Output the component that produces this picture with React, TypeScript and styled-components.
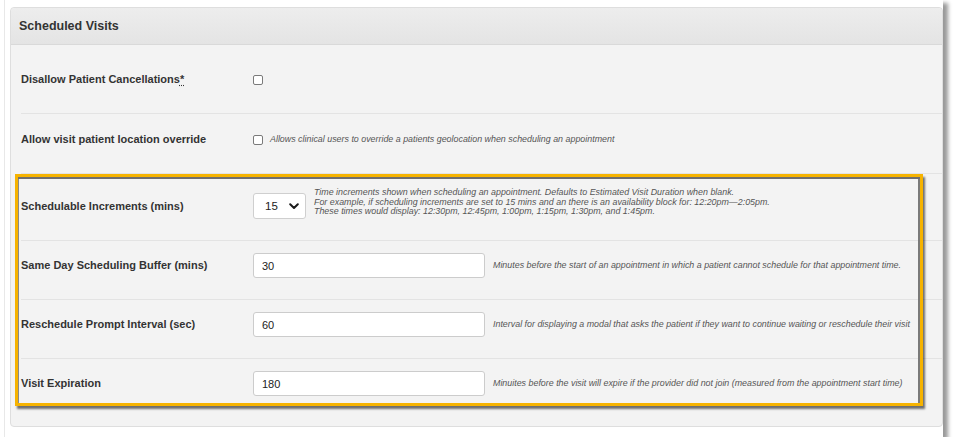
import React from "react";
import styled, { createGlobalStyle } from "styled-components";

const GlobalStyle = createGlobalStyle`
  body {
    margin: 0;
    background: #ffffff;
    font-family: "Liberation Sans", Arial, Helvetica, sans-serif;
    color: #333333;
  }
`;

const Frame = styled.div`
  width: 933px;
  margin-left: 4px;
  padding: 7px 0 10px 5px;
  background: #ffffff;
  border-left: 1px solid #e8e8e8;
  box-shadow: 5px 3px 4px rgba(0, 0, 0, 0.4);
`;

const Panel = styled.div`
  background: #f3f3f3;
  border: 1px solid #dedede;
  border-radius: 4px;
`;

const Header = styled.div`
  height: 36px;
  display: flex;
  align-items: center;
  padding-left: 8px;
  background: linear-gradient(#ededed, #e4e4e4);
  border-bottom: 1px solid #d9d9d9;
  border-radius: 4px 4px 0 0;
`;

const Title = styled.h2`
  margin: 0;
  font-size: 12.5px;
  font-weight: bold;
  color: #333333;
`;

const Body = styled.div`
  padding-bottom: 20px;
`;

const Row = styled.div<{ $pt?: number; $pb?: number }>`
  display: grid;
  grid-template-columns: 232px 1fr;
  align-items: center;
  margin-left: 10px;
  padding: ${(p) => p.$pt ?? 12}px 0 ${(p) => p.$pb ?? 21}px;
  border-bottom: 1px solid #e3e3e3;

  &:last-child {
    border-bottom: none;
    padding-bottom: 10px;
  }
`;

const Label = styled.label<{ $offset?: number }>`
  font-size: 11px;
  font-weight: bold;
  color: #333333;
  padding-top: ${(p) => p.$offset ?? 0}px;
  line-height: 13px;
`;

const Req = styled.abbr`
  text-decoration: underline dotted;
  text-underline-offset: 2px;
`;

const Control = styled.div<{ $top?: boolean; $gap?: number }>`
  display: flex;
  align-items: ${(p) => (p.$top ? "flex-start" : "center")};
  min-height: 25px;
  gap: ${(p) => p.$gap ?? 8}px;
`;

const Check = styled.input.attrs({ type: "checkbox" })`
  appearance: none;
  width: 10px;
  height: 10px;
  margin: 0;
  background: #ffffff;
  border: 1px solid #7a7a7a;
  border-radius: 2px;
  flex: none;
`;

const Hint = styled.p<{ $lift?: number }>`
  margin: ${(p) => -(p.$lift ?? 0)}px 0 0;
  font-size: 8.9px;
  line-height: 9.6px;
  font-style: italic;
  color: #555555;
`;

const SelectBox = styled.div`
  width: 53px;
  height: 26px;
  margin-top: 4px;
  box-sizing: border-box;
  display: flex;
  align-items: center;
  justify-content: space-between;
  padding: 0 6px 0 11px;
  background: #ffffff;
  border: 1px solid #cfcfcf;
  border-radius: 3px;
  font-size: 11.5px;
  color: #222222;
  flex: none;
`;

const TextInput = styled.input`
  width: 232px;
  height: 25px;
  box-sizing: border-box;
  padding: 0 8px;
  background: #ffffff;
  border: 1px solid #cccccc;
  border-radius: 3px;
  font-family: inherit;
  font-size: 11px;
  color: #222222;
  flex: none;
`;

// yellow annotation frame drawn over the grouped rows
const Highlight = styled.div`
  position: relative;

  &::after {
    content: "";
    position: absolute;
    left: 4px;
    right: 19px;
    top: 0;
    bottom: 0;
    border: 3px solid #f6b300;
    box-shadow: inset 0 2px 0 #6f6f6f, inset 1px 0 0 #8a8a8a,
      inset -2px 0 0 #7a7a7a, 2px 3px 2px rgba(0, 0, 0, 0.55);
    pointer-events: none;
  }
`;

const Chevron = () => (
  <svg width="10" height="7" viewBox="0 0 10 7">
    <polyline
      points="1.2,1.3 5,5 8.8,1.3"
      fill="none"
      stroke="#1a1a1a"
      strokeWidth="2"
      strokeLinecap="round"
      strokeLinejoin="round"
    />
  </svg>
);

const numberRows = [
  {
    label: "Same Day Scheduling Buffer (mins)",
    value: "30",
    hint: "Minutes before the start of an appointment in which a patient cannot schedule for that appointment time.",
  },
  {
    label: "Reschedule Prompt Interval (sec)",
    value: "60",
    hint: "Interval for displaying a modal that asks the patient if they want to continue waiting or reschedule their visit",
  },
  {
    label: "Visit Expiration",
    value: "180",
    hint: "Minuites before the visit will expire if the provider did not join (measured from the appointment start time)",
  },
];

const App = () => {
  return (
    <>
      <GlobalStyle />
      <Frame>
        <Panel>
          <Header>
            <Title>Scheduled Visits</Title>
          </Header>
          <Body>
            <Row $pt={22}>
              <Label>
                Disallow Patient Cancellations<Req title="required">*</Req>
              </Label>
              <Control>
                <Check />
              </Control>
            </Row>
            <Row $pt={13}>
              <Label>Allow visit patient location override</Label>
              <Control $gap={7}>
                <Check />
                <Hint>
                  Allows clinical users to override a patients geolocation when scheduling an
                  appointment
                </Hint>
              </Control>
            </Row>
            <Highlight>
              <Row $pt={15}>
                <Label $offset={5}>Schedulable Increments (mins)</Label>
                <Control $top>
                  <SelectBox>
                    <span>15</span>
                    <Chevron />
                  </SelectBox>
                  <Hint $lift={1}>
                    Time increments shown when scheduling an appointment. Defaults to Estimated
                    Visit Duration when blank.
                    <br />
                    For example, if scheduling increments are set to 15 mins and an there is an
                    availability block for: 12:20pm—2:05pm.
                    <br />
                    These times would display: 12:30pm, 12:45pm, 1:00pm, 1:15pm, 1:30pm, and
                    1:45pm.
                  </Hint>
                </Control>
              </Row>
              {numberRows.map((r) => (
                <Row key={r.label}>
                  <Label>{r.label}</Label>
                  <Control>
                    <TextInput defaultValue={r.value} />
                    <Hint>{r.hint}</Hint>
                  </Control>
                </Row>
              ))}
            </Highlight>
          </Body>
        </Panel>
      </Frame>
    </>
  );
};

export default App;
